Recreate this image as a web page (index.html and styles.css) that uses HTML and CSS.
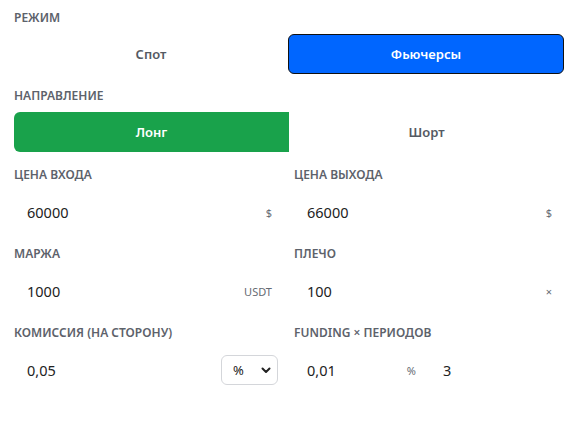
FILE: index.html
```html
<!DOCTYPE html>
<html>
<head>
<meta charset="utf-8">
<title>Калькулятор</title>
<link rel="stylesheet" href="styles.css">
</head>
<body>
	<div class="calc">
		<div class="block">
			<label class="cap">Режим</label>
			<div class="seg">
				<button class="seg-btn">Спот</button>
				<button class="seg-btn blue">Фьючерсы</button>
			</div>
		</div>
		<div class="block last">
			<label class="cap">Направление</label>
			<div class="seg">
				<button class="seg-btn green">Лонг</button>
				<button class="seg-btn">Шорт</button>
			</div>
		</div>
		<div class="grid">
			<div class="field">
				<label class="cap">Цена входа</label>
				<div class="inp"><input type="text" value="60000"><span class="sfx">$</span></div>
			</div>
			<div class="field">
				<label class="cap">Цена выхода</label>
				<div class="inp"><input type="text" value="66000"><span class="sfx">$</span></div>
			</div>
			<div class="field">
				<label class="cap">Маржа</label>
				<div class="inp"><input type="text" value="1000"><span class="sfx">USDT</span></div>
			</div>
			<div class="field">
				<label class="cap">Плечо</label>
				<div class="inp"><input type="text" value="100"><span class="sfx">×</span></div>
			</div>
			<div class="field">
				<label class="cap">Комиссия (на сторону)</label>
				<div class="row">
					<div class="inp"><input type="text" value="0,05"></div>
					<div class="sel">
						<select><option>%</option><option>$</option></select>
						<svg class="chev" width="10" height="7" viewBox="0 0 10 7"><path d="M1.5 1.5 L5 5 L8.5 1.5" fill="none" stroke="#222" stroke-width="2" stroke-linecap="round" stroke-linejoin="round"/></svg>
					</div>
				</div>
			</div>
			<div class="field">
				<label class="cap">Funding × периодов</label>
				<div class="row">
					<div class="inp"><input type="text" value="0,01"><span class="sfx">%</span></div>
					<div class="inp"><input type="text" value="3"></div>
				</div>
			</div>
		</div>
	</div>
</body>
</html>
```

FILE: styles.css
```css
*{
	box-sizing: border-box;
}
body{
	margin: 0;
	background: #ffffff;
	font-family: "Noto Sans", "Open Sans", sans-serif;
	color: #222222;
}
.calc{
	width: 564px;
	padding: 10px 0 0 14px;
}
.block{
	margin-bottom: 14px;
}
.block.last{
	margin-bottom: 15px;
}
.cap{
	display: block;
	font-size: 12px;
	line-height: 16px;
	font-weight: 600;
	text-transform: uppercase;
	color: #5d626b;
	margin-bottom: 8px;
}
.seg{
	display: flex;
}
.seg-btn{
	flex: 1;
	height: 40px;
	border: none;
	background: none;
	font-family: inherit;
	font-size: 13px;
	font-weight: 600;
	color: #555a63;
	border-radius: 6px;
	cursor: pointer;
}
.seg-btn.blue{
	background: #0066ff;
	color: #ffffff;
	border: 1.5px solid #111111;
}
.seg-btn.green{
	background: #19a24b;
	color: #ffffff;
	border-radius: 6px 0 0 6px;
}
.grid{
	display: grid;
	grid-template-columns: 264px 264px;
	column-gap: 16px;
	row-gap: 14px;
}
.field .cap{
	margin-bottom: 9px;
}
.row{
	display: flex;
	align-items: center;
	gap: 8px;
}
.inp{
	flex: 1;
	display: flex;
	align-items: center;
	height: 40px;
	padding: 0 6px 0 13px;
	min-width: 0;
}
.inp input{
	flex: 1;
	min-width: 0;
	border: none;
	outline: none;
	background: none;
	padding: 0;
	font-family: inherit;
	font-size: 14.5px;
	color: #222222;
}
.sfx{
	font-size: 11px;
	color: #666b73;
}
.sel{
	position: relative;
	width: 57px;
	height: 30px;
}
.sel select{
	appearance: none;
	-webkit-appearance: none;
	width: 100%;
	height: 100%;
	border: 1px solid #d4d6da;
	border-radius: 6px;
	background: #ffffff;
	padding: 0 0 0 11px;
	font-family: inherit;
	font-size: 13px;
	color: #222222;
}
.chev{
	position: absolute;
	right: 7px;
	top: 12px;
	pointer-events: none;
}
```
